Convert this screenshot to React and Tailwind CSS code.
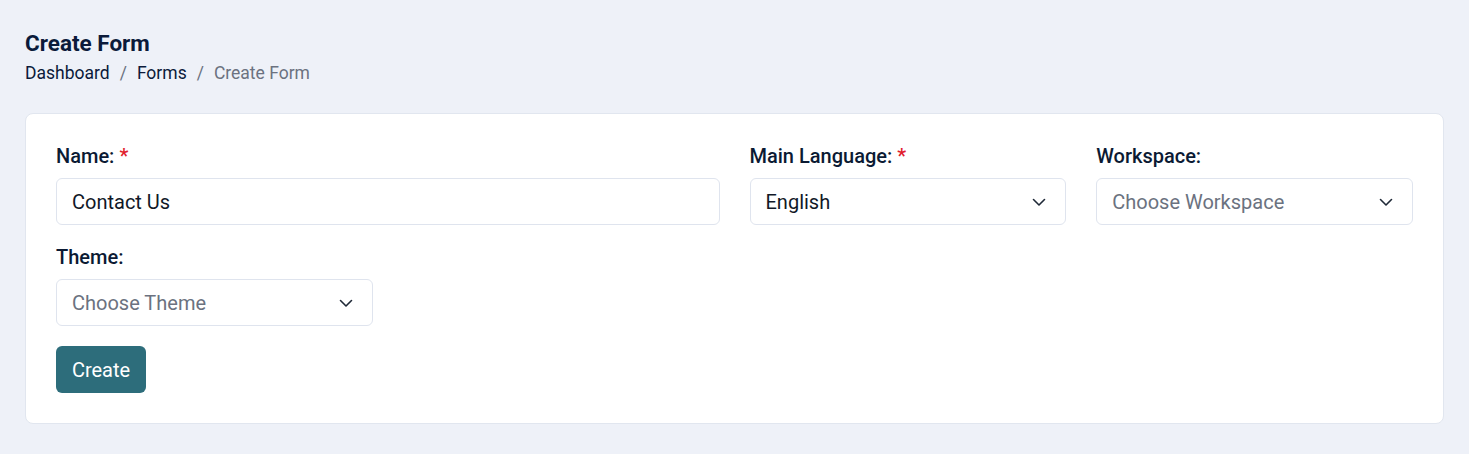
import React from "react";

function Chevron() {
  return (
    <svg width="16" height="16" viewBox="0 0 16 16" fill="none" className="shrink-0">
      <path d="M2.5 5.5L8 11L13.5 5.5" stroke="#1f2937" strokeWidth="1.6" strokeLinecap="round" strokeLinejoin="round" />
    </svg>
  );
}

function Label({ children, required }) {
  return (
    <div className="mb-[9px] text-[20px] leading-[25px] font-medium text-[#0b1a33]">
      {children}
      {required && <span className="ml-[5px] text-[#e11d2e]">*</span>}
    </div>
  );
}

function Select({ value, placeholder }) {
  return (
    <div className="flex h-[47px] items-center justify-between rounded-[6px] border border-[#dfe4ee] bg-white pl-[15px] pr-[18px]">
      <span className={`text-[20px] ${value ? "text-[#111827]" : "text-[#6b7280]"}`}>{value || placeholder}</span>
      <Chevron />
    </div>
  );
}

export default function App() {
  return (
    <div className="min-h-[454px] bg-[#eef1f8] px-[25px] pt-[30px] pb-[30px]" style={{ fontFamily: "Roboto, 'Liberation Sans', sans-serif" }}>
      <h1 className="text-[22.5px] leading-[26px] font-bold text-[#0b1a3a]">Create Form</h1>
      <div className="mt-[5px] flex items-center text-[17.5px] leading-[24px]">
        <span className="text-[#0b1a3a]">Dashboard</span>
        <span className="mx-[10px] text-[#6b7280]">/</span>
        <span className="text-[#0b1a3a]">Forms</span>
        <span className="mx-[10px] text-[#6b7280]">/</span>
        <span className="text-[#6b7280]">Create Form</span>
      </div>
      <div className="mt-[28px] rounded-[8px] border border-[#e1e6ef] bg-white p-[30px]">
        <div className="grid grid-cols-12 gap-x-[30px] gap-y-[20px]">
          <div className="col-span-6">
            <Label required>Name:</Label>
            <div className="flex h-[47px] items-center rounded-[6px] border border-[#dfe4ee] bg-white px-[15px] text-[20px] text-[#111827]">
              Contact Us
            </div>
          </div>
          <div className="col-span-3">
            <Label required>Main Language:</Label>
            <Select value="English" />
          </div>
          <div className="col-span-3">
            <Label>Workspace:</Label>
            <Select placeholder="Choose Workspace" />
          </div>
          <div className="col-span-3">
            <Label>Theme:</Label>
            <Select placeholder="Choose Theme" />
          </div>
          <div className="col-span-12">
            <button className="h-[47px] w-[90px] rounded-[6px] bg-[#2d6d7b] text-[20px] text-white">Create</button>
          </div>
        </div>
      </div>
    </div>
  );
}
